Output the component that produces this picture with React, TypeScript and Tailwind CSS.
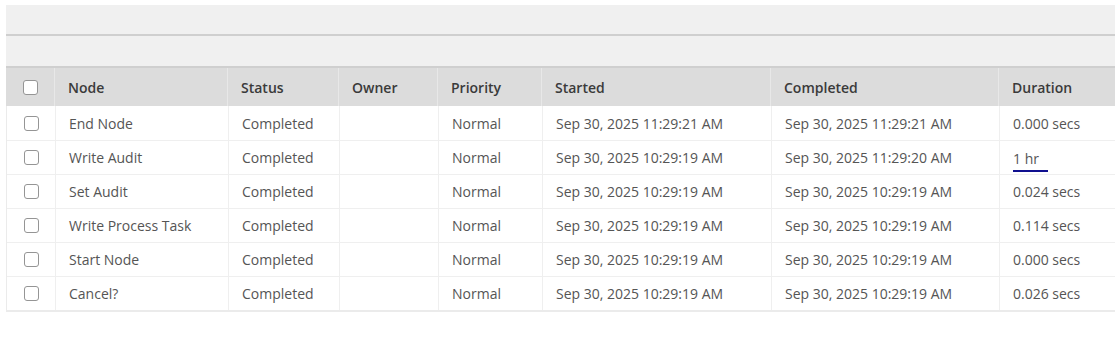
import React from 'react';

interface Row {
    node: string;
    started: string;
    completed: string;
    duration: string;
    link?: boolean;
}

const rows: Row[] = [
    { node: 'End Node', started: 'Sep 30, 2025 11:29:21 AM', completed: 'Sep 30, 2025 11:29:21 AM', duration: '0.000 secs' },
    { node: 'Write Audit', started: 'Sep 30, 2025 10:29:19 AM', completed: 'Sep 30, 2025 11:29:20 AM', duration: '1 hr', link: true },
    { node: 'Set Audit', started: 'Sep 30, 2025 10:29:19 AM', completed: 'Sep 30, 2025 10:29:19 AM', duration: '0.024 secs' },
    { node: 'Write Process Task', started: 'Sep 30, 2025 10:29:19 AM', completed: 'Sep 30, 2025 10:29:19 AM', duration: '0.114 secs' },
    { node: 'Start Node', started: 'Sep 30, 2025 10:29:19 AM', completed: 'Sep 30, 2025 10:29:19 AM', duration: '0.000 secs' },
    { node: 'Cancel?', started: 'Sep 30, 2025 10:29:19 AM', completed: 'Sep 30, 2025 10:29:19 AM', duration: '0.026 secs' },
];

const Box = () => (
    <span className="block w-[15px] h-[15px] rounded-[3px] border-[1.5px] border-[#959595] bg-white" />
);

const cols = 'grid grid-cols-[49px_173px_111px_99px_104px_229px_228px_1fr]';

export default function App() {
    return (
        <div className="w-[1115px] h-[340px] bg-white overflow-hidden pt-[5px] pl-[6px] text-[14px]" style={{ fontFamily: '"Open Sans", "Noto Sans", sans-serif' }}>
            <div className="w-[1120px]">
                <div className="h-[31px] bg-[#f0f0f0] border-b-2 border-[#cfcfcf]" />
                <div className="h-[32px] bg-[#f0f0f0] border-b-2 border-[#cfcfcf]" />
                <div className={`${cols} h-[38px] bg-[#dcdcdc] text-[#3a3a3a] font-semibold`}>
                    <div className="flex items-center justify-center border-r border-[#e8e8e8]">
                        <Box />
                    </div>
                    {['Node', 'Status', 'Owner', 'Priority', 'Started', 'Completed', 'Duration'].map((h, i) => (
                        <div key={h} className={`flex items-center px-[13px] ${i < 6 ? 'border-r border-[#e8e8e8]' : ''}`}>
                            {h}
                        </div>
                    ))}
                </div>
                <div className="border-l border-b-2 border-[#ebebeb]">
                    {rows.map((r) => (
                        <div key={r.node} className={`${cols} h-[34px] border-t border-[#efefef] first:border-t-0 text-[#555]`}>
                            <div className="flex items-center justify-center border-r border-[#efefef]">
                                <Box />
                            </div>
                            <div className="flex items-center px-[13px] border-r border-[#efefef]">{r.node}</div>
                            <div className="flex items-center px-[13px] border-r border-[#efefef]">Completed</div>
                            <div className="flex items-center px-[13px] border-r border-[#efefef]" />
                            <div className="flex items-center px-[13px] border-r border-[#efefef]">Normal</div>
                            <div className="flex items-center px-[13px] border-r border-[#efefef]">{r.started}</div>
                            <div className="flex items-center px-[13px] border-r border-[#efefef]">{r.completed}</div>
                            <div className="flex items-center px-[13px]">
                                {r.link ? (
                                    <span className="inline-block w-[35px] pt-[5px] border-b-2 border-[#10108f] leading-[22px]">{r.duration}</span>
                                ) : (
                                    r.duration
                                )}
                            </div>
                        </div>
                    ))}
                </div>
            </div>
        </div>
    );
}
